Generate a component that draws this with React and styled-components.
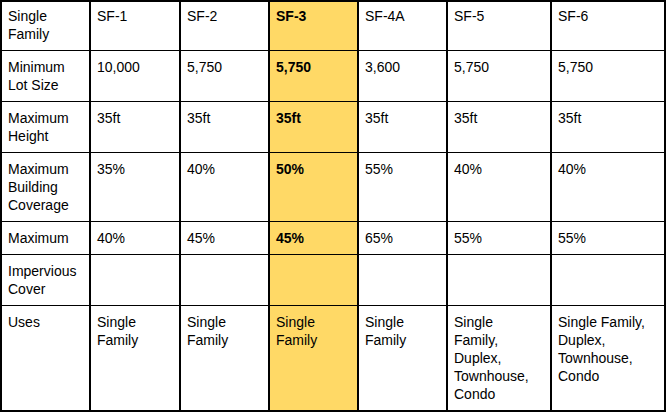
import React from "react";
import styled, { createGlobalStyle } from "styled-components";

const GlobalStyle = createGlobalStyle`
    html, body {
        margin: 0;
        padding: 0;
        background: #ffffff;
    }
`;

const columns = [
    { key: "label", width: 89 },
    { key: "SF-1", width: 90 },
    { key: "SF-2", width: 89 },
    { key: "SF-3", width: 89, highlight: true },
    { key: "SF-4A", width: 89 },
    { key: "SF-5", width: 104 },
    { key: "SF-6", width: 114 },
];

const rows = [
    {
        header: true,
        cells: ["Single Family", "SF-1", "SF-2", "SF-3", "SF-4A", "SF-5", "SF-6"],
    },
    {
        cells: ["Minimum Lot Size", "10,000", "5,750", "5,750", "3,600", "5,750", "5,750"],
    },
    {
        cells: ["Maximum Height", "35ft", "35ft", "35ft", "35ft", "35ft", "35ft"],
    },
    {
        cells: ["Maximum Building Coverage", "35%", "40%", "50%", "55%", "40%", "40%"],
    },
    {
        cells: ["Maximum", "40%", "45%", "45%", "65%", "55%", "55%"],
    },
    {
        cells: ["Impervious Cover", "", "", "", "", "", ""],
    },
    {
        last: true,
        cells: [
            "Uses",
            "Single Family",
            "Single Family",
            "Single Family",
            "Single Family",
            "Single Family, Duplex, Townhouse, Condo",
            "Single Family, Duplex, Townhouse, Condo",
        ],
    },
];

const App = () => {
    return (
        <>
            <GlobalStyle />
            <Table>
                <colgroup>
                    {columns.map((col) => (
                        <col key={col.key} style={{ width: col.width }} />
                    ))}
                </colgroup>
                <tbody>
                    {rows.map((row, rIdx) => (
                        <tr key={rIdx}>
                            {row.cells.map((text, cIdx) => (
                                <Cell
                                    key={cIdx}
                                    $header={row.header}
                                    $last={row.last}
                                    $highlight={columns[cIdx].highlight}
                                    $bold={columns[cIdx].highlight && !row.last}
                                >
                                    {text}
                                </Cell>
                            ))}
                        </tr>
                    ))}
                </tbody>
            </Table>
        </>
    );
};

const Table = styled.table`
    width: 666px;
    table-layout: fixed;
    border-collapse: separate;
    border-spacing: 0;
    border-top: 2px solid #000;
    border-left: 2px solid #000;
    font-family: "Liberation Sans", Arial, sans-serif;
    font-size: 14px;
    line-height: 18px;
    color: #000;
`;

const Cell = styled.td`
    box-sizing: border-box;
    vertical-align: top;
    text-align: left;
    padding: ${({ $header }) => ($header ? "5px 10px 7px 6px" : "7px 10px 7px 6px")};
    border-right: 2px solid #000;
    border-bottom: ${({ $last }) => ($last ? "2px" : "1px")} solid #000;
    background-color: ${({ $highlight }) => ($highlight ? "#ffd966" : "#ffffff")};
    font-weight: ${({ $bold }) => ($bold ? "bold" : "normal")};
    word-wrap: break-word;
`;

export default App;
